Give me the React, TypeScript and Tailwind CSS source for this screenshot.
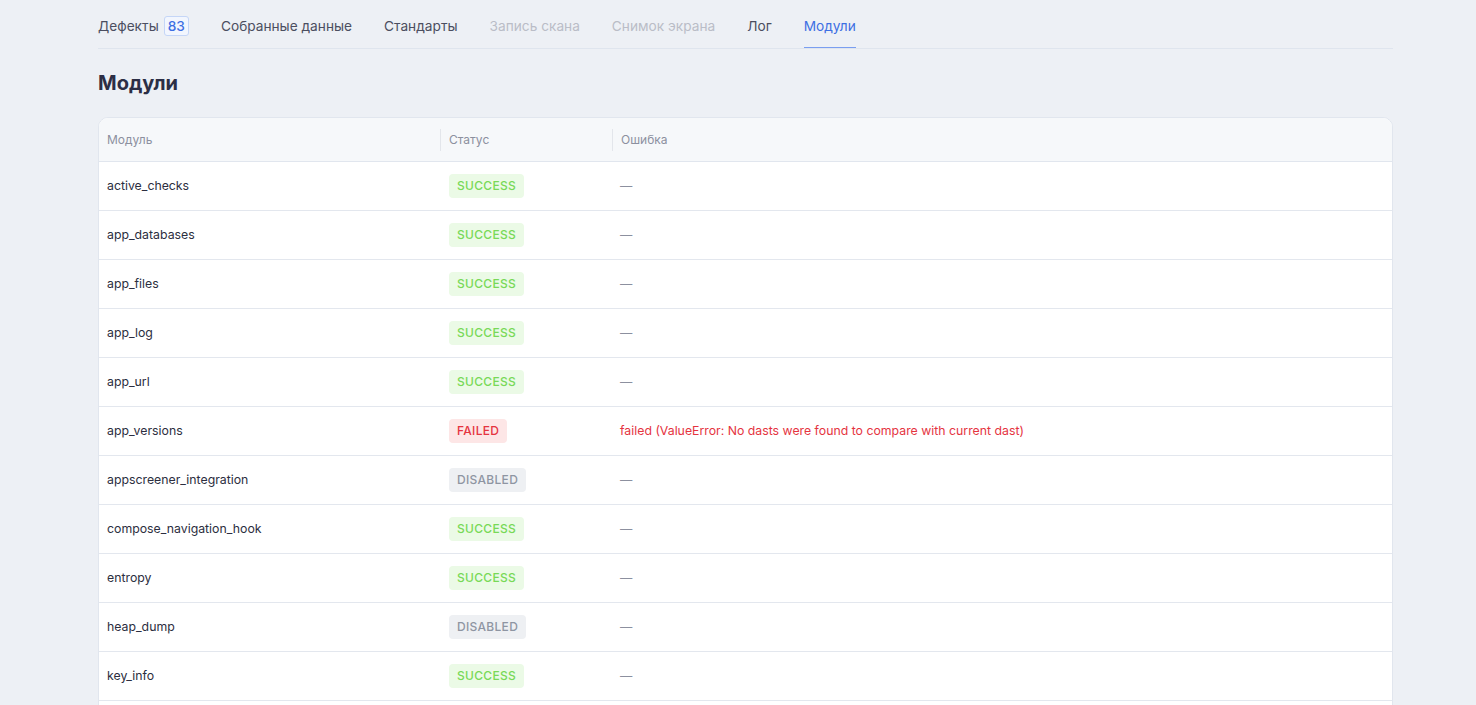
import React from 'react'

type Status = 'SUCCESS' | 'FAILED' | 'DISABLED'

const TABS: { label: string; count?: number; muted?: boolean; active?: boolean }[] = [
  { label: 'Дефекты', count: 83 },
  { label: 'Собранные данные' },
  { label: 'Стандарты' },
  { label: 'Запись скана', muted: true },
  { label: 'Снимок экрана', muted: true },
  { label: 'Лог' },
  { label: 'Модули', active: true },
]

const MODULES: { name: string; status: Status; error?: string }[] = [
  { name: 'active_checks', status: 'SUCCESS' },
  { name: 'app_databases', status: 'SUCCESS' },
  { name: 'app_files', status: 'SUCCESS' },
  { name: 'app_log', status: 'SUCCESS' },
  { name: 'app_url', status: 'SUCCESS' },
  { name: 'app_versions', status: 'FAILED', error: 'failed (ValueError: No dasts were found to compare with current dast)' },
  { name: 'appscreener_integration', status: 'DISABLED' },
  { name: 'compose_navigation_hook', status: 'SUCCESS' },
  { name: 'entropy', status: 'SUCCESS' },
  { name: 'heap_dump', status: 'DISABLED' },
  { name: 'key_info', status: 'SUCCESS' },
  { name: 'manifest', status: 'SUCCESS' },
]

const BADGE: Record<Status, string> = {
  SUCCESS: 'bg-[#ebfae6] text-[#78d957]',
  FAILED: 'bg-[#fde6e6] text-[#e5343f]',
  DISABLED: 'bg-[#eef0f3] text-[#8e95a2]',
}

export default function App() {
  return (
    <div className="min-h-screen bg-[#edf0f5] font-['Inter',sans-serif]">
      <div className="mx-[98px] w-[1295px]">
        {/* tabs */}
        <nav className="flex gap-8 border-b border-[#dfe5ee] h-[49px]">
          {TABS.map((t) => (
            <div
              key={t.label}
              className={
                'flex items-center gap-[5px] text-[13.7px] border-b pt-[5px] ' +
                (t.active
                  ? 'text-[#3d6fe3] border-[#7a9ef0]'
                  : t.muted
                    ? 'text-[#babdc7] border-transparent'
                    : 'text-[#4b4e60] border-transparent')
              }
            >
              {t.label}
              {t.count !== undefined && (
                <span className="rounded-[3px] border border-[#c5d6f7] bg-[#f2f6fe] px-[3px] h-[20px] leading-[18px] text-[13.7px] font-medium text-[#3d6fe3]">
                  {t.count}
                </span>
              )}
            </div>
          ))}
        </nav>

        <h1 className="mt-[22px] text-[20px] font-bold text-[#2c2e45] leading-[24px]">Модули</h1>

        {/* table */}
        <div className="mt-[22px] rounded-[10px] border border-[#e1e6ee] bg-white overflow-hidden">
          <div className="flex h-[44px] items-center bg-[#f6f8fa] border-b border-[#e1e6ee] text-[12px] text-[#8c909f]">
            <div className="w-[341px] px-2">Модуль</div>
            <div className="w-[172px] px-2 border-l border-[#e3e6eb] h-[22px] flex items-center">Статус</div>
            <div className="flex-1 px-2 border-l border-[#e3e6eb] h-[22px] flex items-center">Ошибка</div>
          </div>
          {MODULES.map((m) => (
            <div key={m.name} className="flex h-[49px] items-center border-b border-[#e3e7ee] text-[12.3px] text-[#2c2e40]">
              <div className="w-[341px] px-2">{m.name}</div>
              <div className="w-[172px] px-2 pl-[9px]">
                <span className={'inline-block rounded-[4px] px-2 h-[24px] leading-[24px] text-[12px] font-medium tracking-[0.3px] ' + BADGE[m.status]}>
                  {m.status}
                </span>
              </div>
              <div className="flex-1 px-2">
                {m.error ? (
                  <span className="text-[#e5343f]">{m.error}</span>
                ) : (
                  <span className="text-[#8c909f]">—</span>
                )}
              </div>
            </div>
          ))}
        </div>
      </div>
    </div>
  )
}
